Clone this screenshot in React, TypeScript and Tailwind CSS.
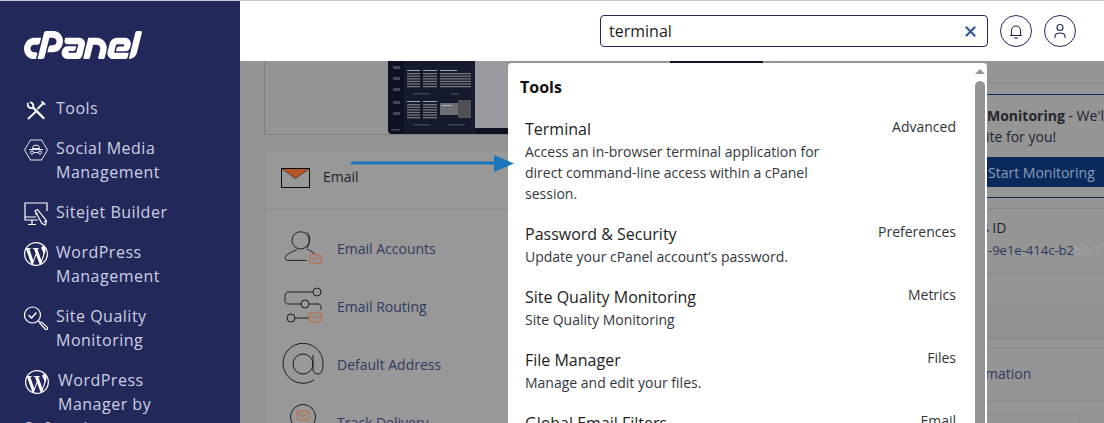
import React from "react";
import { SiCpanel, SiWordpress } from "react-icons/si";

const ToolsIcon = () => (
  <svg width="24" height="24" viewBox="0 0 24 24" fill="none" stroke="white" strokeWidth="1.8" strokeLinecap="round" strokeLinejoin="round">
    <path d="M9 9.500 19.500 20" strokeWidth="2.400" />
    <path d="M3.800 5.500a3.600 3.600 0 0 0 5 4.200M9 9.500a3.600 3.600 0 0 0-2.500-5.200" />
    <path d="M4.500 20.500l8-7.500M14 10.500l5-5" />
    <path d="M18 3.800l2.600 2.400" />
  </svg>
);

const SocialIcon = () => (
  <svg width="24" height="22" viewBox="0 0 24 22" fill="none" stroke="white" strokeWidth="0.9">
    <path d="M6.500 1h11L23.500 11l-6 10h-11L.5 11z" />
    <path d="M8.500 9.500a3.500 3.500 0 0 1 7 0zM5 10.500h14" />
    <circle cx="8" cy="13.500" r="1.600" />
    <circle cx="16" cy="13.500" r="1.600" />
    <path d="M9.600 13.500h4.800" />
  </svg>
);

const SitejetIcon = () => (
  <svg width="24" height="24" viewBox="0 0 24 24" fill="none" stroke="white" strokeWidth="1.200">
    <path d="M12 1H1v17h13M1 15h11M8 18v4M4 22.500h8" />
    <path d="M12 1h11v8" />
    <path d="M11 9l2.500-1.500 9 11.500-1 4-3.500-1.500z" fill="#23285b" />
    <path d="M13.500 11l-2 1.500M20 20l2-1" />
  </svg>
);

const QualityIcon = () => (
  <svg width="24" height="24" viewBox="0 0 24 24" fill="none" stroke="white" strokeWidth="1.200" strokeLinecap="round">
    <circle cx="8.500" cy="9" r="8" />
    <path d="M5 9.500 7.500 12l4.500-5" strokeWidth="1.500" />
    <path d="M14.500 15l1.500 1.500" />
    <path d="M16 17.500l1.500-1.500 6 5.500a1.500 1.500 0 0 1-2 2z" />
  </svg>
);

const WpIcon = () => <SiWordpress size={24} className="text-white" />;

const EnvelopeIcon = () => (
  <svg width="29" height="20" viewBox="0 0 29 20" fill="none">
    <path d="M1 1h27L14.500 10.500z" fill="#b5562a" />
    <rect x="0.500" y="0.500" width="28" height="19" stroke="#0c0c0c" fill="none" />
    <path d="M1 1l13.500 9.500L28 1" stroke="#0c0c0c" strokeWidth="0.500" />
  </svg>
);

const Mini = ({ x, y }: { x: number; y: number }) => (
  <g>
    <rect x={x} y={y} width="12" height="9" rx="1" fill="#959595" stroke="#c06a40" strokeWidth="1" />
    <path d={`M${x + 2} ${y + 2.5}l4 3 4-3`} stroke="#c06a40" strokeWidth="0.900" fill="none" />
  </g>
);

const AccountsIcon = () => (
  <svg width="44" height="36" viewBox="0 0 44 36" fill="none" stroke="#1c1c22" strokeWidth="1">
    <circle cx="19.500" cy="10" r="9" />
    <path d="M26 1.500c4 3 4 11 0 16.500" />
    <path d="M26 19c4 2 7 3.500 9 6" />
    <path d="M26 31H6c-3 0-3.500-3-1.500-5 3-3.500 8-5 11-6" />
    <Mini x={29} y={25} />
  </svg>
);

const RoutingIcon = () => (
  <svg width="42" height="38" viewBox="0 0 42 38" fill="none" stroke="#1c1c22" strokeWidth="1">
    <circle cx="35" cy="5" r="4" />
    <path d="M31 5H7C3 5 3 8 3 12s0 5 4 5h12" />
    <circle cx="23" cy="17" r="4" />
    <path d="M27 17h9c3 0 3 2 3 6" />
    <circle cx="9" cy="31" r="4" />
    <path d="M13 31h14" />
    <Mini x={27} y={26} />
  </svg>
);

const AtIcon = () => (
  <svg width="42" height="42" viewBox="0 0 42 42" fill="none" stroke="#1c1c22" strokeWidth="1">
    <path d="M32 37A20 20 0 1 1 41 21c0 5-1 10-5 10-3 0-5-2-5-5V12" />
    <circle cx="21" cy="21" r="10" />
  </svg>
);

const TrackIcon = () => (
  <svg width="28" height="28" viewBox="0 0 28 28" fill="none" stroke="#1c1c22" strokeWidth="1" className="-translate-y-[5px]">
    <circle cx="14" cy="14" r="12.500" />
    <Mini x={8} y={8} />
  </svg>
);

const navItems = [
  { icon: <ToolsIcon />, lines: ["Tools"] },
  { icon: <SocialIcon />, lines: ["Social Media", "Management"] },
  { icon: <SitejetIcon />, lines: ["Sitejet Builder"] },
  { icon: <WpIcon />, lines: ["WordPress", "Management"] },
  { icon: <QualityIcon />, lines: ["Site Quality", "Monitoring"] },
];

const results = [
  { title: "Terminal", cat: "Advanced", desc: "Access an in-browser terminal application for direct command-line access within a cPanel session." },
  { title: "Password & Security", cat: "Preferences", desc: "Update your cPanel account’s password." },
  { title: "Site Quality Monitoring", cat: "Metrics", desc: "Site Quality Monitoring" },
  { title: "File Manager", cat: "Files", desc: "Manage and edit your files." },
  { title: "Global Email Filters", cat: "Email", desc: "Configure filters for all mail." },
];

const emailRows = [
  { icon: <AccountsIcon />, label: "Email Accounts" },
  { icon: <RoutingIcon />, label: "Email Routing" },
  { icon: <AtIcon />, label: "Default Address" },
  { icon: <TrackIcon />, label: "Track Delivery" },
];

const Block = ({ x, y, w, rows }: { x: number; y: number; w: number; rows: number }) => (
  <g>
    <rect x={x} y={y} width={Math.min(w, 17)} height="1" fill="#a5a8ae" />
    {Array.from({ length: rows }).map((_, i) => (
      <rect key={i} x={x} y={y + 3 + i * 2.6} width={w} height="1.300" fill="#74777f" />
    ))}
  </g>
);

const Thumb = () => (
  <svg width="382" height="73" viewBox="0 0 382 73" className="block">
    <rect x="282" y="0" width="93" height="2" fill="#0e1222" />
    <rect x="87" y="0" width="33" height="67" fill="#9a9aa0" />
    <path d="M0 0h87v67h33v6H4a4 4 0 0 1-4-4z" fill="#0e1222" />
    <rect x="16" y="0" width="71" height="73" fill="#151a2c" />
    {[5, 16, 27, 40, 51].map((y) => (
      <rect key={y} x="5" y={y} width="7" height="3" fill="#444a58" />
    ))}
    <rect x="3" y="68" width="9" height="1.500" fill="#444a58" />
    <Block x={19} y={9} w={13} rows={6} />
    <Block x={35} y={9} w={14} rows={6} />
    <Block x={52} y={9} w={31} rows={6} />
    <Block x={19} y={40} w={13} rows={6} />
    <Block x={35} y={40} w={14} rows={6} />
    <rect x="25" y="32" width="17" height="1.500" fill="#3e4250" />
    <rect x="63" y="32" width="8" height="1.500" fill="#3e4250" />
    <rect x="25" y="63" width="17" height="1.500" fill="#3e4250" />
    <rect x="60" y="63" width="17" height="1.500" fill="#3e4250" />
    <rect x="52" y="42" width="18" height="12" fill="#6c6e74" />
    <rect x="70" y="39" width="13" height="18" fill="#4e5058" />
    <rect x="54" y="44" width="10" height="1" fill="#b0b2b8" />
  </svg>
);

export default function App() {
  return (
    <div className="flex h-[423px] w-[1104px] overflow-hidden bg-[#959595] font-['Open_Sans',sans-serif] relative">
      <aside className="h-full w-[240px] shrink-0 overflow-hidden border-t border-[#c8c8c8] bg-[#23285b] pl-[24px] pt-[32px]">
        <SiCpanel size={118} className="-my-[47px] scale-y-[1.08] text-white" />
        <nav className="mt-[39px] flex flex-col gap-[16px] text-[16px] leading-[24px] tracking-[0.5px] text-[#ccd0e2]">
          {navItems.map((it) => (
            <div key={it.lines[0]} className="flex items-start gap-[8px]">
              <div className="flex h-[24px] w-[24px] shrink-0 translate-y-[2px] items-center justify-center">{it.icon}</div>
              <div>{it.lines.map((l) => <div key={l}>{l}</div>)}</div>
            </div>
          ))}
          <div className="flex items-start gap-[8px] pl-[1px]">
            <div className="flex h-[24px] w-[24px] shrink-0 translate-y-[2px] items-center justify-center"><WpIcon /></div>
            <div className="ml-[1px]">
              <div>WordPress</div>
              <div>Manager by</div>
            </div>
          </div>
          <div className="-mt-[16px]">Softaculous</div>
        </nav>
      </aside>

      <div className="flex min-w-0 flex-1 flex-col">
        <header className="flex h-[61px] shrink-0 items-center justify-end gap-[12px] border-t border-[#c8c8c8] bg-white pr-[28px]">
          <div className="flex h-[32px] w-[388px] items-center justify-between rounded-[4px] border border-[#23285b] pl-[8px] pr-[11px] text-[16px] text-[#1c1c1c]">
            <span>terminal</span>
            <svg width="11" height="11" viewBox="0 0 11 11" stroke="#3d5e94" strokeWidth="2.400" strokeLinecap="round"><path d="M1.500 1.500l8 8M9.500 1.500l-8 8" /></svg>
          </div>
          <div className="flex h-[32px] w-[32px] items-center justify-center rounded-full border border-[#23285b]">
            <svg width="14" height="15" viewBox="0 0 14 15" fill="none" stroke="#23285b" strokeWidth="1.100"><path d="M2.500 11V6.500a4.500 4.500 0 0 1 9 0V11M1 11.500h12" /><path d="M5.500 14h3" strokeWidth="1.300" /></svg>
          </div>
          <div className="flex h-[32px] w-[32px] items-center justify-center rounded-full border border-[#23285b]">
            <svg width="14" height="16" viewBox="0 0 14 16" fill="none" stroke="#23285b" strokeWidth="1.100"><circle cx="7" cy="4.500" r="3" /><path d="M2 15v-1.500C2 11 4 10 7 10s5 1 5 3.500V15" /></svg>
          </div>
        </header>

        <main className="flex min-h-0 flex-1 gap-[10px] overflow-hidden pl-[24px]">
          <section className="w-[514px] shrink-0">
            <div className="h-[74px] overflow-hidden rounded-b-[2px] border-x border-b border-[#7f7f7f] pl-[123px]">
              <Thumb />
            </div>
            <div className="mt-[15px] border border-[#8e8e8e] bg-[#989898]">
              <div className="flex h-[59px] items-center gap-[13px] border-b border-[#8a8a8a] pb-[4px] pl-[16px] text-[14px] text-[#20242e]">
                <EnvelopeIcon />
                <span className="mb-[4px]">Email</span>
              </div>
              <div className="flex flex-col pl-[17px] pt-[9px] text-[14px] text-[#303a62]">
                {emailRows.map((r) => (
                  <div key={r.label} className="flex h-[58px] items-center">
                    <div className="flex w-[55px] shrink-0 items-center justify-center pr-[13px]">{r.icon}</div>
                    <span>{r.label}</span>
                  </div>
                ))}
              </div>
            </div>
          </section>

          <section className="w-[400px] shrink-0 text-[14px] text-[#1f2433]">
            <div className="h-[22px] border-b border-[#888888]" />
            <div className="mt-[11px] h-[104px] whitespace-nowrap border-y border-[#0a2a5c] pt-[10px] leading-[21px]">
              <div className="pl-[114px]"><b className="text-[#25262c]">Site Quality Monitoring</b> - We'll scan your</div>
              <div className="pl-[164px]">website for you!</div>
              <div className="ml-[112px] mt-[10px] flex h-[30px] w-[288px] items-center bg-[#0a2a5c] pl-[88px] text-[#8a9ab8]">Start Monitoring</div>
            </div>
            <div className="mt-[10px] h-[66px] border-y border-[#888888] leading-[21px]">
              <div className="pl-[160px] pt-[8px]">Status ID</div>
              <div className="mt-[2px] whitespace-nowrap pl-[200px] text-[13px] text-[#2a3a5c]">-9e1e-414c-b2<span className="text-[#a3a3a3]">b0-7</span></div>
            </div>
            <div className="h-[32px] border-b border-[#888888]" />
            <div className="h-[33px] border-b border-[#888888] bg-[#929292]" />
            <div className="h-[9px]" />
            <div className="flex h-[53px] items-center border-y border-[#8a8a8a] pb-[2px] pl-[197px] text-[#303a62]">mation</div>
            <div className="ml-[190px] mt-[13px] h-[30px] w-[102px] rounded-[2px] border border-[#8a8a8a]" />
          </section>
        </main>
      </div>

      <div className="absolute left-[508px] top-[63px] h-[360px] w-[479px] overflow-hidden rounded-t-[4px] bg-white">
        <div className="flex h-full">
          <div className="flex-1 pl-[12px] pr-[19px]">
            <div className="pt-[12px] text-[16px] font-bold leading-[24px] text-[#111111]">Tools</div>
            <div className="pt-[9px]">
              {results.map((r) => (
                <div key={r.title} className="py-[9px] pl-[5px]">
                  <div className="flex items-start justify-between text-[14px] leading-[21px] text-[#30343a]">
                    <span className="text-[16px] leading-[24px] text-[#1c1c1c]">{r.title}</span>
                    <span className="leading-[20px]">{r.cat}</span>
                  </div>
                  <div className="w-[315px] text-[14px] leading-[21px] text-[#33373d]">{r.desc}</div>
                </div>
              ))}
            </div>
          </div>
          <div className="w-[12px] shrink-0 pr-[2px]">
            <div className="mx-auto mt-[6px] h-0 w-0 border-x-[5px] border-b-[5px] border-x-transparent border-b-[#959595]" />
            <div className="mx-auto mt-[7px] h-[350px] w-[10px] rounded-t-[5px] bg-[#959595]" />
          </div>
        </div>
      </div>

      <svg className="absolute left-[350px] top-[155px]" width="166" height="18" viewBox="0 0 166 18">
        <path d="M1 8h146" stroke="#1b75bb" strokeWidth="3" />
        <path d="M144 0l20 8.500-20 8.500z" fill="#1b75bb" />
      </svg>
    </div>
  );
}
